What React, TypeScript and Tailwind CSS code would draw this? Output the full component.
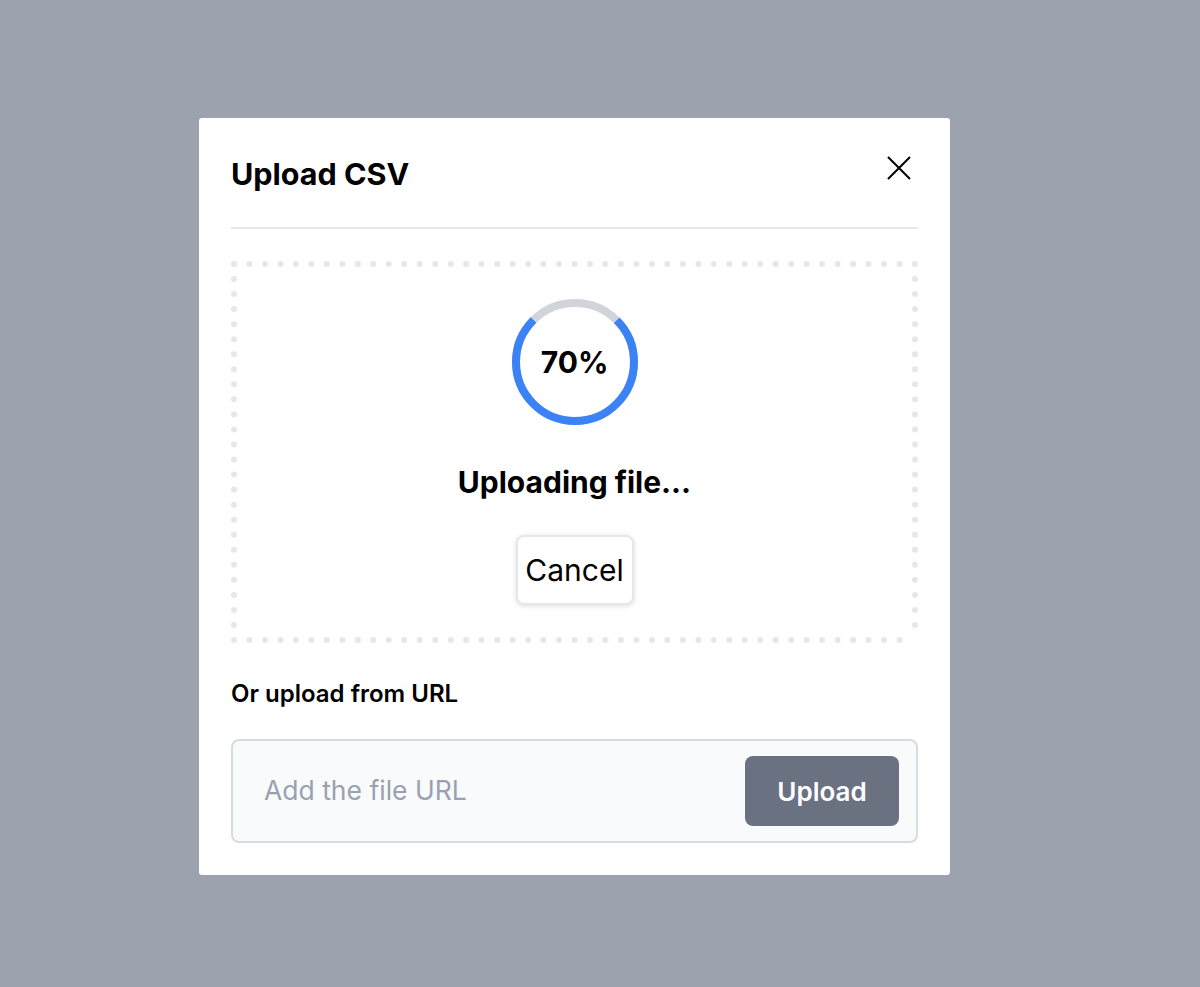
import { useState } from "react";

function DottedFrame() {
  // evenly spaced round dots along each side, landing on the corners
  const w = 687;
  const h = 382;
  const c = "#e5e7eb";
  return (
    <svg className="pointer-events-none absolute inset-0" width={w} height={h} viewBox={`0 0 ${w} ${h}`}>
      <g stroke={c} strokeWidth={6} strokeLinecap="round" strokeDasharray="0 1" fill="none">
        <line x1={3} y1={3} x2={w - 3} y2={3} pathLength={44} />
        <line x1={3} y1={h - 3} x2={w - 3} y2={h - 3} pathLength={44} />
        <line x1={3} y1={3} x2={3} y2={h - 3} pathLength={25} />
        <line x1={w - 3} y1={3} x2={w - 3} y2={h - 3} pathLength={25} />
      </g>
    </svg>
  );
}

function ProgressRing({ value }: { value: number }) {
  const r = 59;
  const circ = 2 * Math.PI * r;
  return (
    <div className="relative flex h-[126px] w-[126px] items-center justify-center">
      <svg className="absolute inset-0" width={126} height={126} viewBox="0 0 126 126">
        <circle cx={63} cy={63} r={r} fill="none" stroke="#d1d5db" strokeWidth={8} />
        <circle
          cx={63}
          cy={63}
          r={r}
          fill="none"
          stroke="#3b82f6"
          strokeWidth={8}
          strokeDasharray={`${circ * 0.75} ${circ}`}
          transform="rotate(-45 63 63)"
        />
      </svg>
      <span className="relative text-[30px] font-bold leading-9 text-black">{value}%</span>
    </div>
  );
}

export default function App() {
  const [url, setUrl] = useState("");

  return (
    <div className="min-h-screen bg-[#9ca3af] pl-[199px] pt-[118px] font-['Inter',sans-serif]">
      <div className="w-[751px] rounded-[3px] bg-white px-8 pb-8 pt-[38px]">
        <div className="flex items-start justify-between">
          <h2 className="text-[30.5px] font-bold leading-9 text-black">Upload CSV</h2>
          <button className="mr-[7px] text-black" aria-label="Close">
            <svg width={24} height={24} viewBox="0 0 24 24" fill="none" stroke="currentColor" strokeWidth={2}>
              <path d="M1 1 23 23M23 1 1 23" />
            </svg>
          </button>
        </div>
        <div className="mt-[35px] h-[2px] bg-gray-200" />

        <div className="relative mt-8 flex h-[382px] flex-col items-center pt-[38px]">
          <DottedFrame />
          <ProgressRing value={70} />
          <p className="mt-[39px] text-[30px] font-bold leading-9 text-black">Uploading file...</p>
          <button className="mt-[35px] flex h-[70px] w-[118px] items-center justify-center rounded-lg border-2 border-gray-200 bg-white text-[30px] text-black shadow-[0_1px_5px_rgba(0,0,0,0.14)]">
            Cancel
          </button>
        </div>

        <p className="mt-[37px] text-[24px] font-semibold leading-7 text-black">Or upload from URL</p>

        <div className="mt-[31px] flex h-[104px] items-center rounded-lg border-2 border-[#d8dbe0] bg-gray-50 pl-[31px] pr-[17px]">
          <input
            value={url}
            onChange={(e) => setUrl(e.target.value)}
            placeholder="Add the file URL"
            className="min-w-0 flex-1 bg-transparent text-[26.5px] text-gray-900 outline-none placeholder:text-gray-400"
          />
          <button className="h-[70px] w-[154px] rounded-lg bg-gray-500 text-[26px] font-semibold text-white">
            Upload
          </button>
        </div>
      </div>
    </div>
  );
}
